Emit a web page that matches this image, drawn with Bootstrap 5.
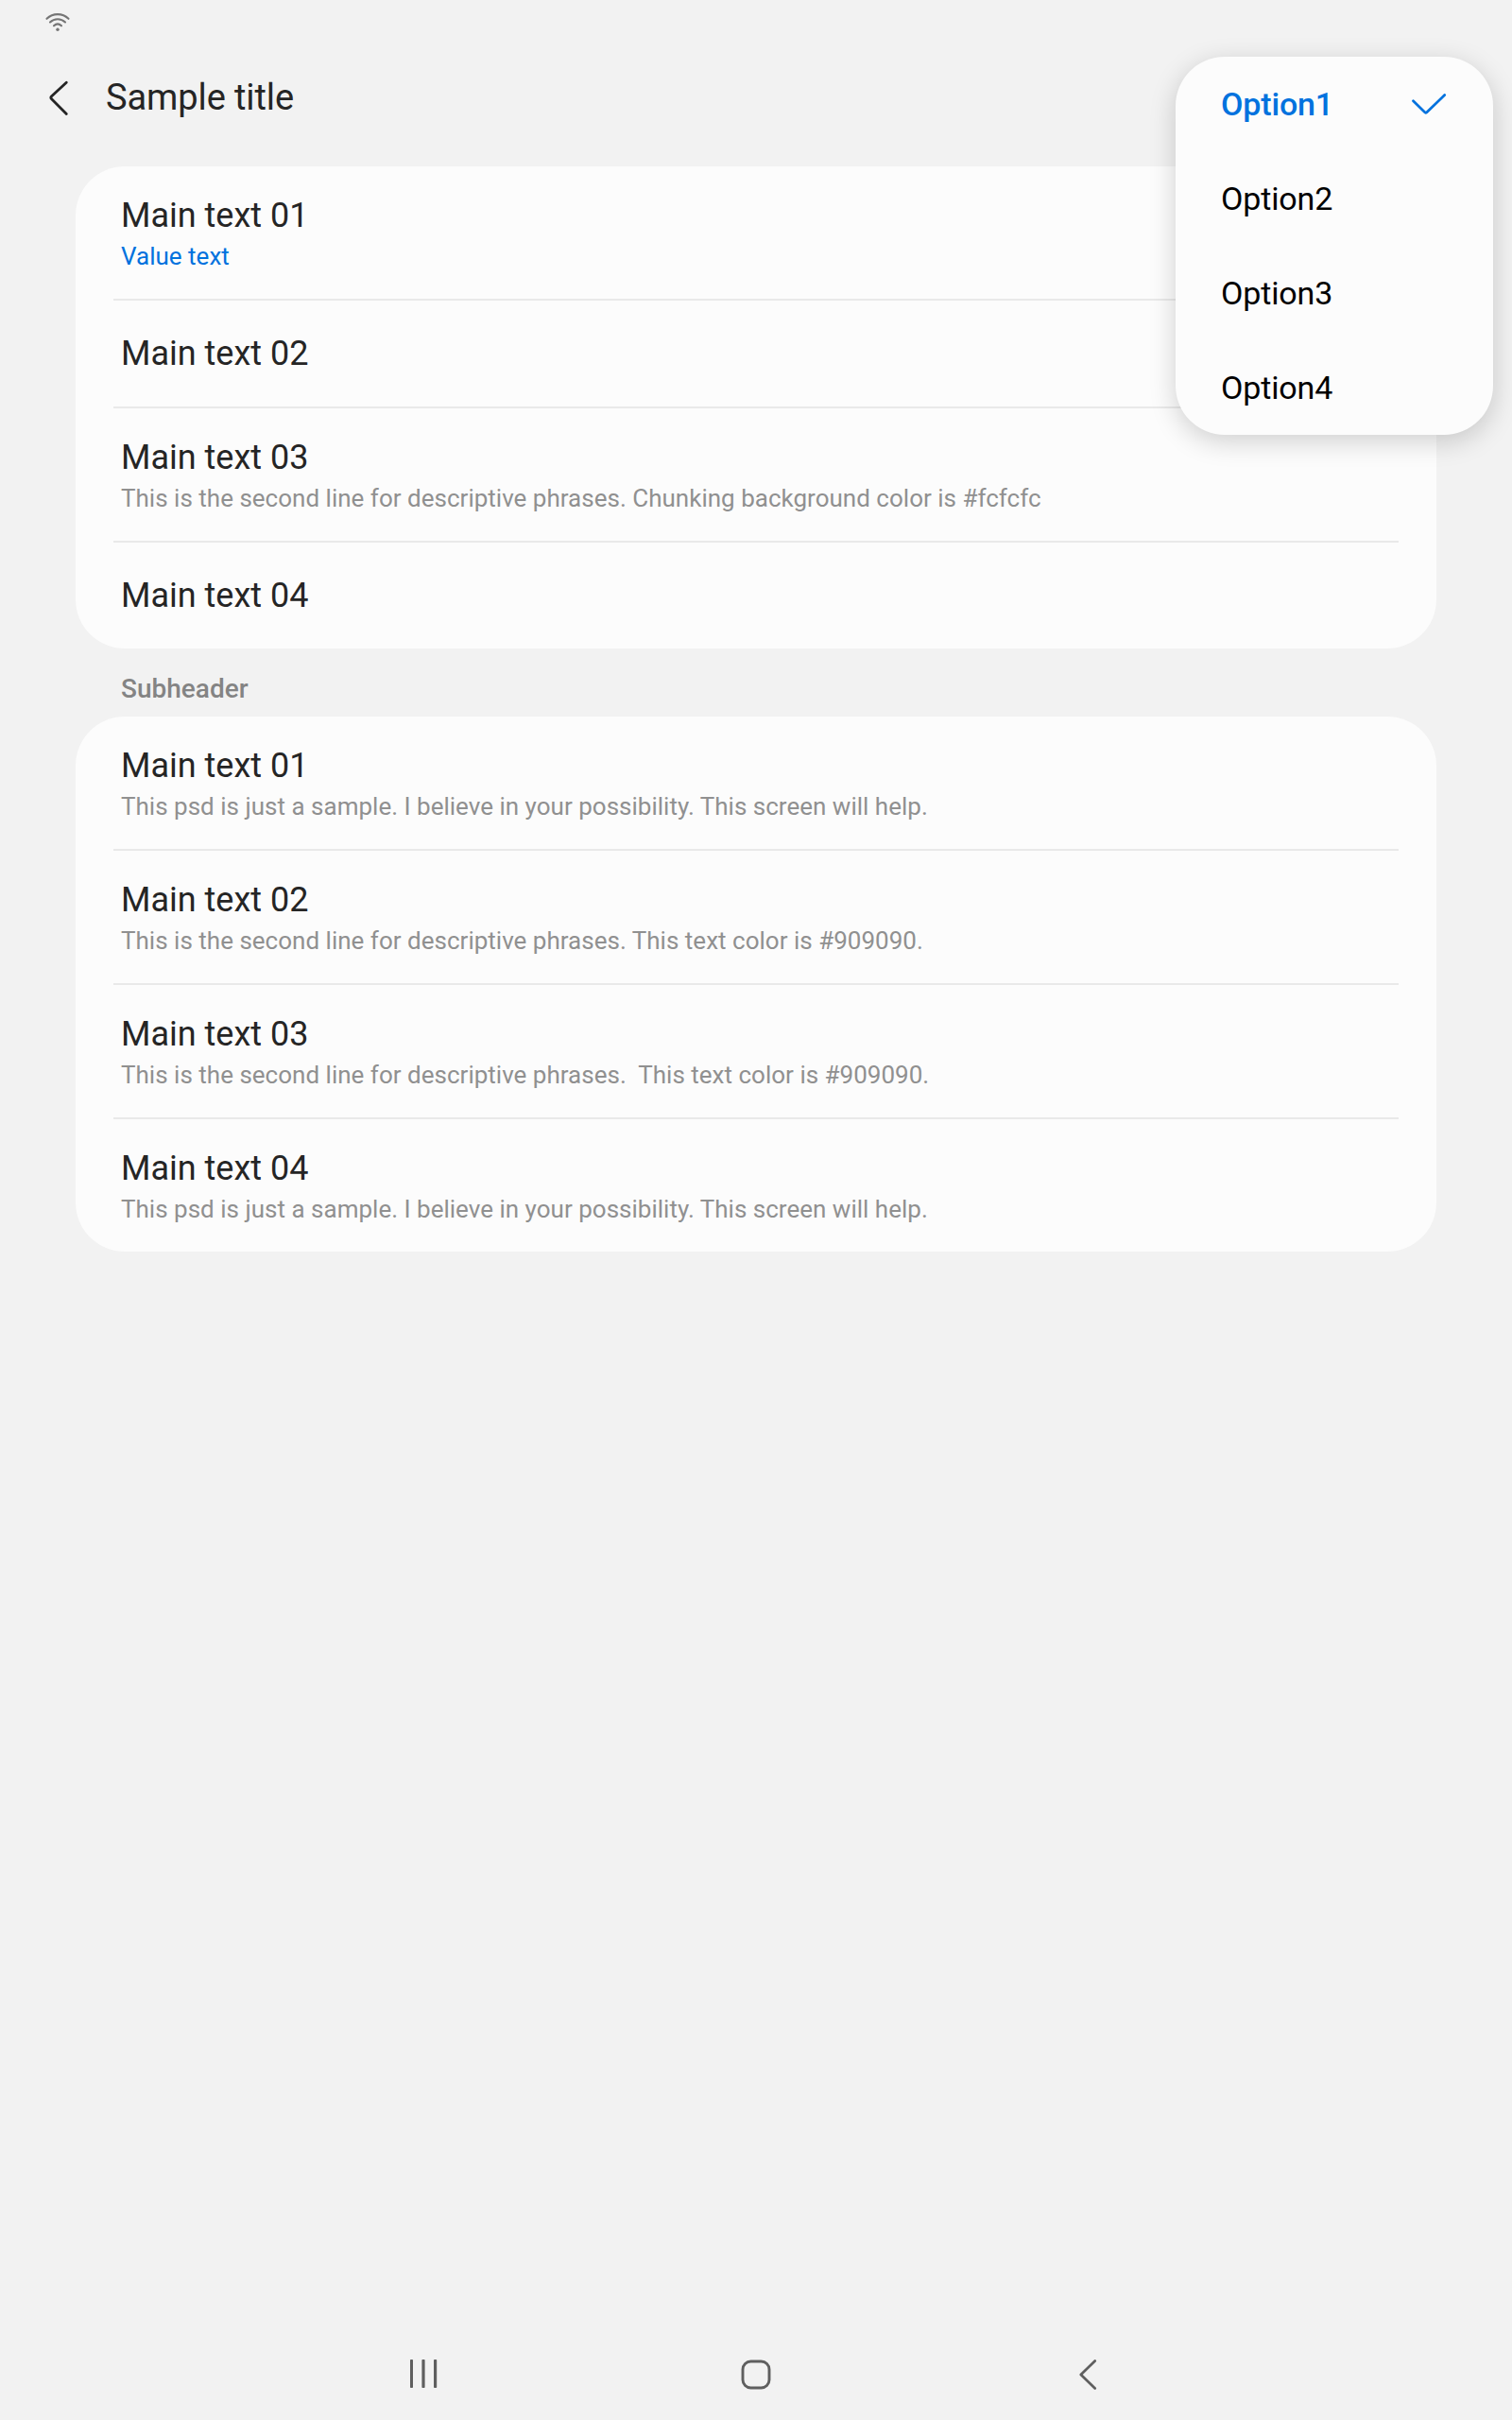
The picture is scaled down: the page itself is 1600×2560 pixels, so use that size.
<!DOCTYPE html>
<html lang="en">
<head>
<meta charset="utf-8">
<meta name="viewport" content="width=device-width, initial-scale=1">
<title>Sample title</title>
<link href="https://cdn.jsdelivr.net/npm/bootstrap@5.3.0/dist/css/bootstrap.min.css" rel="stylesheet">
<style>
body{font-family:Roboto,sans-serif;background:#f2f2f2;color:#252525}
.screen{height:2560px}
.status-bar{height:46px;padding:14px 0 0 48px;line-height:0}
.app-bar{height:130px;padding:0 0 16px 48px}
.app-bar .back-btn{width:64px;line-height:0}
.app-title{font-size:38px;line-height:44px;letter-spacing:-.1px}
.settings-card{--bs-card-border-width:0;--bs-card-bg:#fcfcfc;--bs-card-border-radius:52px;--bs-card-color:#252525;margin:0 80px}
.settings-card .list-group{--bs-list-group-bg:transparent;--bs-list-group-color:#252525;padding:0 40px}
.settings-row{border:0;border-radius:0;padding:35px 8px 0;height:112px}
.settings-row.two-line{height:140px;padding-top:31px}
.settings-row:not(:last-child){box-sizing:content-box;height:77px;border-bottom:2px solid #e9e9e9}
.settings-row.two-line:not(:last-child){height:109px}
.row-title{font-size:36px;line-height:42px}
.row-note{font-size:26px;line-height:36px;margin-top:4px;color:#909090;white-space:pre;letter-spacing:.01px}
.row-value{color:#0072de}
.subheader{height:72px;padding:26px 0 0 128px;font-size:28px;line-height:34px;font-weight:500;color:#848484;margin:0}
.option-menu{position:absolute;left:1244px;top:60px;width:336px;padding:0;border:0;border-radius:52px;background:#fcfcfc;box-shadow:0 7px 28px rgba(0,0,0,.18)}
.option-menu .dropdown-item{height:100px;padding:0 48px;font-size:34px;line-height:52px;letter-spacing:-.15px;color:#000;background:none}
.option-menu .dropdown-item.active{color:#0072de;font-weight:500}
.nav-bar{height:96px}
.nav-key{width:352px;line-height:0}
</style>
</head>
<body>
<div class="screen position-relative d-flex flex-column overflow-hidden">
  <div class="status-bar">
    <svg width="26" height="20" viewBox="0 0 26 20" fill="none" stroke="#757575" stroke-width="2.1" stroke-linecap="round"><path d="M1.500 5.800C8-.5 18-.5 24.500 5.800M5 9.500c4.500-4.400 11.500-4.400 16 0M9 13.200c2.400-2.300 5.600-2.300 8 0"/><circle cx="13" cy="17.300" r="1.700" fill="#757575" stroke="none"/></svg>
  </div>
  <header class="app-bar d-flex align-items-center">
    <div class="back-btn"><svg width="30" height="40" viewBox="0 0 30 40" fill="none" stroke="#252525" stroke-width="2.800" stroke-linecap="round" stroke-linejoin="round"><path d="M22.300 4.200L6.400 19.100Q5.200 20.300 6.400 21.500L22.300 37.500"/></svg></div>
    <h1 class="app-title mb-0 fw-normal">Sample title</h1>
  </header>
  <main>
    <section class="card settings-card">
      <ul class="list-group">
        <li class="list-group-item settings-row two-line"><div class="row-title">Main text 01</div><div class="row-note row-value">Value text</div></li>
        <li class="list-group-item settings-row"><div class="row-title">Main text 02</div></li>
        <li class="list-group-item settings-row two-line"><div class="row-title">Main text 03</div><div class="row-note">This is the second line for descriptive phrases. Chunking background color is #fcfcfc</div></li>
        <li class="list-group-item settings-row"><div class="row-title">Main text 04</div></li>
      </ul>
    </section>
    <h2 class="subheader">Subheader</h2>
    <section class="card settings-card">
      <ul class="list-group">
        <li class="list-group-item settings-row two-line"><div class="row-title">Main text 01</div><div class="row-note">This psd is just a sample. I believe in your possibility. This screen will help.</div></li>
        <li class="list-group-item settings-row two-line"><div class="row-title">Main text 02</div><div class="row-note">This is the second line for descriptive phrases. This text color is #909090.</div></li>
        <li class="list-group-item settings-row two-line"><div class="row-title">Main text 03</div><div class="row-note">This is the second line for descriptive phrases.  This text color is #909090.</div></li>
        <li class="list-group-item settings-row two-line"><div class="row-title">Main text 04</div><div class="row-note">This psd is just a sample. I believe in your possibility. This screen will help.</div></li>
      </ul>
    </section>
  </main>
  <div class="dropdown-menu option-menu show">
    <div class="dropdown-item active d-flex align-items-center justify-content-between">Option1<svg width="40" height="26" viewBox="0 0 40 26" fill="none" stroke="#0072de" stroke-width="2.700" stroke-linecap="round" stroke-linejoin="round"><path d="M3.500 9.800L16 22Q16.800 22.600 17.600 22L36.700 3.500"/></svg></div>
    <div class="dropdown-item d-flex align-items-center">Option2</div>
    <div class="dropdown-item d-flex align-items-center">Option3</div>
    <div class="dropdown-item d-flex align-items-center">Option4</div>
  </div>
  <nav class="nav-bar mt-auto d-flex justify-content-center align-items-center">
    <div class="nav-key text-center"><svg width="32" height="32" viewBox="0 0 32 32" fill="#5f5f5f"><rect x="2" y="0" width="3" height="30" rx=".8"/><rect x="14.400" y="0" width="3.200" height="30" rx=".8"/><rect x="27" y="0" width="3.200" height="30" rx=".8"/></svg></div>
    <div class="nav-key text-center"><svg width="32" height="32" viewBox="0 0 32 32" fill="none" stroke="#5f5f5f" stroke-width="2.900"><rect x="2" y="2" width="28" height="28" rx="8.500"/></svg></div>
    <div class="nav-key text-center"><svg width="32" height="32" viewBox="0 0 32 32" fill="none" stroke="#5f5f5f" stroke-width="2.700" stroke-linecap="round" stroke-linejoin="round"><path d="M22.700 1.500L7.800 16 22.700 30.500"/></svg></div>
  </nav>
</div>
<script src="https://cdn.jsdelivr.net/npm/bootstrap@5.3.0/dist/js/bootstrap.bundle.min.js"></script>
</body>
</html>
